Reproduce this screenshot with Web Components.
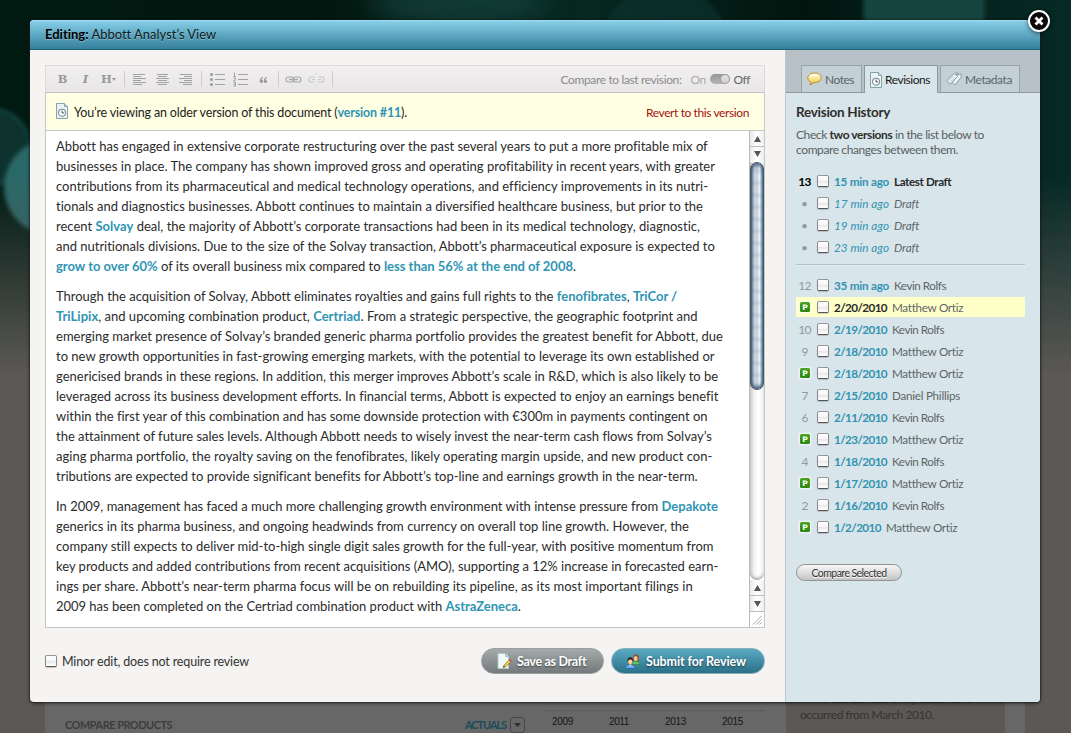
<!DOCTYPE html>
<html lang="en">
<head>
<meta charset="utf-8">
<title>Editing: Abbott Analyst's View</title>
<style>
html,body{margin:0;height:733px;overflow:hidden;background:#5b5855;font-family:Lato,"Open Sans",sans-serif;font-size:13px;color:#2a2a2a}
</style>
</head>
<body>
<app-screen></app-screen>

<script>
const define = (name, html, setup) => {
  const t = document.createElement('template');
  t.innerHTML = html;
  customElements.define(name, class extends HTMLElement {
    connectedCallback() {
      if (this.shadowRoot) return;
      this.attachShadow({ mode: 'open' }).append(t.content.cloneNode(true));
      if (setup) setup(this, this.shadowRoot);
    }
  });
};

/* One line of text, tracked so that it fills the measure given by w. */
define('text-line', `
<style>
:host{display:block;width:fit-content;white-space:nowrap}
::slotted(a){color:#2f95b3;font-weight:700}
::slotted(b){font-weight:700;color:#2e2e2e}
</style><slot></slot>`, el => {
  const w = +el.getAttribute('w');
  const n = el.textContent.length;
  if (w) el.style.letterSpacing = ((w - el.getBoundingClientRect().width) / n).toFixed(4) + 'px';
});

/* Small picture icons */
const pics = {
  doc: [12, 16, `<path d="M.5.5h8l3 3v12H.5z" fill="#eaf3f5" stroke="#86a3aa"/><path d="M8.500.5v3h3" fill="#c9dde2" stroke="#86a3aa"/><circle cx="6" cy="9.700" r="3.500" fill="#fff" stroke="#7d8b90" stroke-width="1.100"/><path d="M6 7.600v2.300h2" fill="none" stroke="#3f5158"/>`],
  note: [15, 14, `<defs><linearGradient id="g" x2="0" y2="1"><stop stop-color="#fffbd8"/><stop offset=".5" stop-color="#f7e38b"/><stop offset="1" stop-color="#edc645"/></linearGradient></defs><path d="M7.500 1C3.500 1 .8 3 .8 5.700c0 2 1.200 3.400 3 4.200L3 13l4-2.500c4.200.1 7.200-1.800 7.200-4.800S11.500 1 7.500 1z" fill="url(#g)" stroke="#b98e2c"/><path d="M3.500 5c1-1.700 5.500-2.200 7.500-.8" stroke="#fff" fill="none" stroke-width="1.300"/>`],
  tags: [16, 14, `<g fill="#edf5f7" stroke="#78959f" stroke-width=".9"><path d="M6.500 10.500 12 2.300l3-.3.3 3-6.500 8z"/><path d="M.7 8.500 8.600 1.200l3.100-.3.200 3.200-7.500 8z"/></g><circle cx="10" cy="2.800" r=".8" fill="#4f6e79"/><path d="m2.500 8.700 5-4.700M4 10l5-4.700" stroke="#a9c0c8" stroke-width=".7"/>`],
  draft: [15, 16, `<path d="M1 .5h7.500l3 3v12H1z" fill="#eff9f7" stroke="#b4c8c6"/><path d="M8.500.5v3h3" fill="#c4dcda" stroke="#a3bdbb"/><path d="m6.300 14.500.8-2.400 5-5 1.600 1.600-5 5z" fill="#f9d94f" stroke="#8b6a20" stroke-width=".8"/><path d="m12.100 7.100 1-1 1.600 1.600-1 1z" fill="#e0453d"/><path d="m6.300 14.500.5-1.500 1 1z" fill="#222"/>`],
  users: [16, 15, `<path d="M6.500 10.500c0-2.500 1.700-3.300 4-3.300s4.500.8 4.500 3.300z" fill="#5ec06f" stroke="#2f8342" stroke-width=".7"/><path d="M8 6.800C7.800 2 8.600.6 10.900.6s3.300 1.600 2.900 6.200z" fill="#9a4b1f"/><ellipse cx="10.700" cy="4.500" rx="1.900" ry="2.500" fill="#f8c79c"/><path d="M.6 14.300c0-2.700 1.900-3.600 4.700-3.600s4.700.9 4.700 3.600z" fill="#69b1f5" stroke="#2860b0" stroke-width=".7"/><path d="m4 10.700 1.300 1.600 1.300-1.600z" fill="#fff"/><ellipse cx="5.300" cy="7.700" rx="2.300" ry="3" fill="#fbd3ab" stroke="#7a4b28" stroke-width=".5"/><path d="M2.500 7.500c-.3-3 .9-4.200 2.800-4.200s3.100 1.200 2.800 4.200c-.7-1.500-1.500-2-2.800-2s-2.100.5-2.800 2z" fill="#2c211d"/>`]
};
define('pic-icon', `<style>:host{display:block;flex:none}svg{display:block}</style>`, (el, r) => {
  const [w, h, d] = pics[el.getAttribute('name')];
  const box = document.createElement('div');
  box.innerHTML = `<svg width="${w}" height="${h}" viewBox="0 0 ${w} ${h}">${d}</svg>`;
  r.append(box);
});

/* Toolbar buttons: 23px cells with a 17x13 glyph */
const rows = (...l) => l.map(([x, y, w]) => `<path d="M${x} ${y}.5h${w}" stroke="#a2a2a2"/>`).join('');
const tools = {
  left: rows([2,1,12],[2,3,8],[2,5,13],[2,7,8],[2,9,13],[2,11,9]),
  center: rows([3,1,11],[4,3,9],[2,5,13],[4,7,9],[2,9,13],[4,11,9]),
  right: rows([3,1,12],[7,3,8],[2,5,13],[7,7,8],[2,9,13],[6,11,9]),
  ul: `<g fill="#999"><circle cx="2.500" cy="1.500" r="1.500"/><circle cx="2.500" cy="6.500" r="1.500"/><circle cx="2.500" cy="11.500" r="1.500"/></g>` + rows([6,1,10],[6,6,10],[6,11,10]),
  ol: `<g fill="none" stroke="#999" stroke-width=".9"><path d="M1.500 0h1v3.500m-1 0h2M1.500 5h2v1.300l-2 1.500h2M1.500 9.500h2v3.600h-2m0-1.800h2"/></g>` + rows([6,1,10],[6,6,10],[6,11,10]),
  quote: `<g fill="#999"><path d="M8 4C6 4.600 4.700 6 4.700 8c0 1.300.8 2 1.700 2a1.600 1.600 0 0 0 .1-3.200c0-.9.600-1.600 1.500-2.100z"/><path d="M12 4c-2 .6-3.300 2-3.300 4 0 1.300.8 2 1.700 2a1.600 1.600 0 0 0 .1-3.200c0-.9.600-1.600 1.500-2.100z"/></g>`,
  link: `<g fill="none" stroke="#a8a8a8" stroke-width="1.200"><rect x="1.100" y="4" width="7.600" height="5" rx="2"/><rect x="8.200" y="4" width="7.600" height="5" rx="2"/><path d="M4 6.500h3m3 0h3M7 6.500h3" stroke-width="1.400"/></g>`,
  unlink: `<g fill="none" stroke="#c9c9c9" stroke-width="1.100"><path d="M7 4H3a2 2 0 0 0-2 2v1a2 2 0 0 0 2 2h4M10 4h4a2 2 0 0 1 2 2v1a2 2 0 0 1-2 2h-4M4 6.500h3m3 0h3"/><path d="M8.500 0v2m0 9v2" stroke="#d8d8d8"/></g>`
};
define('tool-button', `
<style>:host{display:flex;width:23px;height:27px;align-items:center;justify-content:center;color:#999;font:700 11.500px "DejaVu Serif",serif}
:host([i]){font-style:italic}
::slotted(i){display:inline-block;border:2.500px solid transparent;border-top:3px solid #999;border-bottom:0;margin:0}
svg{display:block;overflow:visible}</style><slot></slot>`, (el, r) => {
  const n = el.getAttribute('name');
  if (n) r.querySelector('slot').insertAdjacentHTML('afterend', `<svg width="17" height="13" viewBox="0 0 17 13">${tools[n]}</svg>`);
});
define('tool-rule', `<style>:host{display:flex;justify-content:center;width:8px}div{width:1px;height:16px;background:#cdcbcc}</style><div></div>`);

define('check-box', `<style>:host{display:block;flex:none;box-sizing:border-box;width:12px;height:12px;border:1px solid #8b8b8b;border-color:#979797 #8a8a8a #555;border-radius:2px;background:linear-gradient(#fff 0,#f6f6f6 45%,#e6e6e6 50%,#fff 95%);box-shadow:0 1px 1px rgba(0,0,0,.18)}</style>`);

define('pill-button', `
<style>
:host{display:flex;box-sizing:border-box;align-items:center;height:26px;border-radius:13px;padding-left:15px;gap:5px;color:#fff;font-weight:700;font-size:12.500px;text-shadow:0 1px 2px rgba(0,0,0,.55);border:1px solid #9aa0a0;background:linear-gradient(#a5abab,#747a7b);width:124px}
:host([kind=primary]){background:linear-gradient(#5aaac2,#2c7089);border-color:#86aebb;width:154px;padding-left:13px}
:host([kind=small]){height:17px;width:106px;padding:0;justify-content:center;color:#333;font-weight:400;font-size:10.500px;text-shadow:0 1px #fff;border-color:#929292;background:linear-gradient(#f6f6f6,#dedede 50%,#c4c4c4)}
</style><slot name="icon"></slot><slot></slot>`);

define('toggle-switch', `<style>:host{display:block;width:20px;height:10px;border-radius:5px;background:linear-gradient(#979797,#b5b5b5)}
div{box-sizing:border-box;width:10px;height:10px;margin-left:10px;border-radius:5px;background:linear-gradient(#e2e2e2,#cfcfcf);border:1px solid #a0a0a0}</style><div></div>`);

define('editor-toolbar', `
<style>
:host{display:flex;height:26px;align-items:center;border:1px solid #dcdadb;border-bottom-color:#c2c2c2;background:linear-gradient(#f1eff0,#e8e6e7);padding-left:5px}
.cmp{margin-left:auto;display:flex;align-items:center;color:#8b8b8b;font-size:12px;padding-right:14px}
.on{color:#aaa;margin:0 4px 0 9px}.off{margin-left:4px;color:#666}
</style>
<tool-button>B</tool-button><tool-button i>I</tool-button><tool-button>H<i></i></tool-button>
<tool-rule></tool-rule>
<tool-button name="left"></tool-button><tool-button name="center"></tool-button><tool-button name="right"></tool-button>
<tool-rule style="width:9px"></tool-rule>
<tool-button name="ul"></tool-button><tool-button name="ol"></tool-button><tool-button name="quote"></tool-button>
<tool-rule style="width:7px"></tool-rule>
<tool-button name="link"></tool-button><tool-button name="unlink"></tool-button>
<tool-rule></tool-rule>
<div class="cmp"><text-line w="121">Compare to last revision:</text-line><text-line class="on" w="15">On</text-line><toggle-switch></toggle-switch><text-line class="off" w="16">Off</text-line></div>`);

define('version-notice', `
<style>
:host{display:flex;align-items:center;height:36px;box-sizing:content-box;background:#ffffe3;border:1px solid #c9c9c2;border-top:0;border-bottom-color:#c6c6c6;padding:1px 15px 0 10px;color:#1c1c1c;font-size:12.500px}
text-line:last-child{margin-left:auto;color:#a5110f;font-size:12px}
pic-icon{margin:0 6px 2px 0}
</style>
<pic-icon name="doc"></pic-icon>
<text-line w="333">You’re viewing an older version of this document (<a>version #11</a>).</text-line>
<text-line w="103">Revert to this version</text-line>`);

define('scroll-bar', `
<style>
:host{display:flex;flex-direction:column;width:14px;border-left:1px solid #b9b9b9;background:#fff}
.btn{height:15px;display:flex;align-items:center;justify-content:center;background:linear-gradient(90deg,#e9e9e9,#fff 50%,#efefef);border-bottom:1px solid #bdbdbd}
.btn svg{display:block}
.track{flex:1;background:linear-gradient(90deg,#ccc,#f1f1f1 30%,#fff 60%,#f0f0f0);border-radius:0 0 7px 7px;box-shadow:inset 0 -3px 3px -1px #aaa}
.thumb{height:228px;box-sizing:border-box;border:1px solid #43566c;border-radius:7px;
background:repeating-linear-gradient(rgba(255,255,255,.0) 0 5px,rgba(80,110,160,.14) 8px,rgba(255,255,255,0) 12px),linear-gradient(90deg,#52677f 0,#aebccb 18%,#d3dae5 35%,#c1cedb 50%,#f0f8fd 72%,#b5c5d4 86%,#647b93);box-shadow:inset 0 3px 4px -1px #3c536d,inset 0 -3px 4px -1px #3c536d}
.grip{height:15px;display:flex;align-items:center;justify-content:center}
.nb{border-color:#fff;height:14px}
</style>
<div class="btn"><svg width="7" height="6"><path d="M3.500 0 7 6H0z" fill="#555"/></svg></div>
<div class="btn nb"><svg width="7" height="6"><path d="M3.500 6 7 0H0z" fill="#555"/></svg></div>
<div class="track"><div class="thumb"></div></div>
<div class="btn"><svg width="7" height="6"><path d="M3.500 0 7 6H0z" fill="#555"/></svg></div>
<div class="btn"><svg width="7" height="6"><path d="M3.500 6 7 0H0z" fill="#555"/></svg></div>
<div class="grip"><svg width="10" height="10"><path d="M1 9.500 9.500 1M4.500 9.500l5-5M7.500 9.500l2-2" stroke="#aaa"/></svg></div>`);

define('document-body', `
<style>
:host{display:flex;height:496px;background:#fff;border:1px solid #c6c6c6;border-top:0}
.text{flex:1;padding:5px 0 0 10px;font-size:13px;line-height:20px;color:#2b2b2b}
.p{margin-bottom:10px}
</style>
<div class="text">
<div class="p">
<text-line w="651">Abbott has engaged in extensive corporate restructuring over the past several years to put a more profitable mix of</text-line>
<text-line w="659">businesses in place. The company has shown improved gross and operating profitability in recent years, with greater</text-line>
<text-line w="652">contributions from its pharmaceutical and medical technology operations, and efficiency improvements in its nutri-</text-line>
<text-line w="647">tionals and diagnostics businesses. Abbott continues to maintain a diversified healthcare business, but prior to the</text-line>
<text-line w="644">recent <a>Solvay</a> deal, the majority of Abbott’s corporate transactions had been in its medical technology, diagnostic,</text-line>
<text-line w="659">and nutritionals divisions. Due to the size of the Solvay transaction, Abbott’s pharmaceutical exposure is expected to</text-line>
<text-line w="520"><a>grow to over 60%</a> of its overall business mix compared to <a>less than 56% at the end of 2008</a>.</text-line>
</div>
<div class="p">
<text-line w="621">Through the acquisition of Solvay, Abbott eliminates royalties and gains full rights to the <a>fenofibrates</a>, <a>TriCor /</a></text-line>
<text-line w="642"><a>TriLipix</a>, and upcoming combination product, <a>Certriad</a>. From a strategic perspective, the geographic footprint and</text-line>
<text-line w="666">emerging market presence of Solvay’s branded generic pharma portfolio provides the greatest benefit for Abbott, due</text-line>
<text-line w="659">to new growth opportunities in fast-growing emerging markets, with the potential to leverage its own established or</text-line>
<text-line w="662">genericised brands in these regions. In addition, this merger improves Abbott’s scale in R&amp;D, which is also likely to be</text-line>
<text-line w="661">leveraged across its business development efforts. In financial terms, Abbott is expected to enjoy an earnings benefit</text-line>
<text-line w="652">within the first year of this combination and has some downside protection with €300m in payments contingent on</text-line>
<text-line w="655">the attainment of future sales levels. Although Abbott needs to wisely invest the near-term cash flows from Solvay’s</text-line>
<text-line w="656">aging pharma portfolio, the royalty saving on the fenofibrates, likely operating margin upside, and new product con-</text-line>
<text-line w="641">tributions are expected to provide significant benefits for Abbott’s top-line and earnings growth in the near-term.</text-line>
</div>
<div class="p">
<text-line w="662">In 2009, management has faced a much more challenging growth environment with intense pressure from <a>Depakote</a></text-line>
<text-line w="633">generics in its pharma business, and ongoing headwinds from currency on overall top line growth. However, the</text-line>
<text-line w="658">company still expects to deliver mid-to-high single digit sales growth for the full-year, with positive momentum from</text-line>
<text-line w="663">key products and added contributions from recent acquisitions (AMO), supporting a 12% increase in forecasted earn-</text-line>
<text-line w="636">ings per share. Abbott’s near-term pharma focus will be on rebuilding its pipeline, as its most important filings in</text-line>
<text-line w="465">2009 has been completed on the Certriad combination product with <a>AstraZeneca</a>.</text-line>
</div>
</div>
<scroll-bar></scroll-bar>`);

define('tab-item', `
<style>
:host{display:flex;box-sizing:border-box;align-items:center;gap:3px;height:27px;padding-left:5px;border:1px solid #98a2a7;border-bottom:0;background:#c3d0d5;color:#5c666a;font-size:12px}
:host([on]){height:28px;background:#d8e5ea;color:#1b1b1b;border-color:#8d989d}
</style><slot name="icon"></slot><slot></slot>`);

define('rev-row', `
<style>
:host{display:flex;align-items:center;height:20px;margin-bottom:2px;font-size:12px;color:#5f6668}
:host([hl]){background:#ffffc8}
.n{width:17px;display:flex;justify-content:center;color:#929a9d;margin-right:4px}
.n text-line{font-size:12px}
.d{margin:0 5px 0 5px;color:#3393b1;font-weight:700;font-size:11.700px}
.w{font-size:11.700px}
:host([it]) .d,:host([it]) .w{font-style:italic;font-weight:400}
:host([latest]) .n{color:#000;font-weight:700}
:host([latest]) .w{color:#2a2a2a;font-weight:700}
:host([hl]) .d{color:#2a2a2a}
.p{flex:none;display:block}
</style>`, (el, r) => {
  const a = k => el.getAttribute(k);
  const n = a('n');
  const mark = n === 'P' ? '<svg class="p" width="14" height="14"><defs><linearGradient id="pg" x2="0" y2="1"><stop stop-color="#4ba51f"/><stop offset="1" stop-color="#2c8510"/></linearGradient></defs><rect x=".5" y=".5" width="13" height="13" rx="2" fill="#fff" opacity=".5"/><rect x="2" y="2" width="10" height="10" rx="1.500" fill="url(#pg)"/><text x="7" y="9.700" text-anchor="middle" font-family="DejaVu Sans,sans-serif" font-weight="700" font-size="7.500" fill="#fff">P</text></svg>' : n === '•' ? '<span>•</span>' : `<text-line w="${n.length * 6.2}">${n}</text-line>`;
  const box = document.createElement('template');
  box.innerHTML = `<div class="n">${mark}</div><check-box></check-box><text-line class="d" w="${a('dw')}">${a('d')}</text-line><text-line class="w" w="${a('ww')}">${a('who')}</text-line>`;
  r.append(box.content);
});

define('side-panel', `
<style>
:host{display:flex;flex-direction:column;width:254px;border-left:1px solid #c0c4c6;background:#d8e5ea;border-radius:0 0 4px 0}
.tabs{display:flex;height:27px;padding:15px 0 0 15px;gap:2px;background:#b7c1c7;border-bottom:1px solid #8d989d}
.in{padding:11px 15px 0 10px}
.h{font-size:13.500px;font-weight:700;line-height:17px;color:#2e2e2e}
.t{margin-top:6px;margin-bottom:14px;font-size:12px;line-height:15px;color:#5a5f61}
hr{border:0;border-top:1px solid #b3c3cc;border-bottom:1px solid #e6eff2;margin:7px 0 9px}
pill-button{margin-top:27px}
</style>
<div class="tabs">
<tab-item style="width:61px"><pic-icon slot="icon" name="note"></pic-icon><text-line w="29">Notes</text-line></tab-item>
<tab-item on style="width:74px"><pic-icon slot="icon" name="doc"></pic-icon><text-line w="45">Revisions</text-line></tab-item>
<tab-item style="width:80px"><pic-icon slot="icon" name="tags"></pic-icon><text-line w="47">Metadata</text-line></tab-item>
</div>
<div class="in">
<text-line class="h" w="94">Revision History</text-line>
<div class="t"><text-line w="188">Check <b>two versions</b> in the list below to</text-line><text-line w="162">compare changes between them.</text-line></div>
<rev-row latest n="13" d="15 min ago" dw="55" who="Latest Draft" ww="57"></rev-row>
<rev-row it n="•" d="17 min ago" dw="55" who="Draft" ww="25"></rev-row>
<rev-row it n="•" d="19 min ago" dw="55" who="Draft" ww="25"></rev-row>
<rev-row it n="•" d="23 min ago" dw="55" who="Draft" ww="25"></rev-row>
<hr>
<rev-row n="12" d="35 min ago" dw="55" who="Kevin Rolfs" ww="52"></rev-row>
<rev-row hl n="P" d="2/20/2010" dw="53" who="Matthew Ortiz" ww="71"></rev-row>
<rev-row n="10" d="2/19/2010" dw="53" who="Kevin Rolfs" ww="52"></rev-row>
<rev-row n="9" d="2/18/2010" dw="53" who="Matthew Ortiz" ww="71"></rev-row>
<rev-row n="P" d="2/18/2010" dw="53" who="Matthew Ortiz" ww="71"></rev-row>
<rev-row n="7" d="2/15/2010" dw="53" who="Daniel Phillips" ww="68"></rev-row>
<rev-row n="6" d="2/11/2010" dw="53" who="Kevin Rolfs" ww="52"></rev-row>
<rev-row n="P" d="1/23/2010" dw="53" who="Matthew Ortiz" ww="71"></rev-row>
<rev-row n="4" d="1/18/2010" dw="53" who="Kevin Rolfs" ww="52"></rev-row>
<rev-row n="P" d="1/17/2010" dw="53" who="Matthew Ortiz" ww="71"></rev-row>
<rev-row n="2" d="1/16/2010" dw="53" who="Kevin Rolfs" ww="52"></rev-row>
<rev-row n="P" d="1/2/2010" dw="47" who="Matthew Ortiz" ww="71"></rev-row>
<pill-button kind="small"><text-line w="75">Compare Selected</text-line></pill-button>
</div>`);

define('close-button', `<style>:host{display:block}svg{display:block;filter:drop-shadow(0 1px 2px rgba(0,0,0,.6))}</style>
<svg width="24" height="24"><circle cx="12" cy="12" r="10" fill="#0a0a0a" stroke="#fff" stroke-width="2"/><path d="m8.500 8.500 7 7m0-7-7 7" stroke="#fff" stroke-width="2.800"/></svg>`);

define('edit-dialog', `
<style>
:host{display:flex;flex-direction:column;width:1010px;height:682px;border-radius:4px;background:#f5f4f2;box-shadow:0 0 1px 1px rgba(25,25,25,.4),0 1px 3px 1px rgba(20,20,20,.5)}
header{height:29px;box-sizing:content-box;display:flex;align-items:center;padding-left:15px;border-radius:4px 4px 0 0;background:linear-gradient(#a5dcef 0,#84cce5 2px,#347f9c);border-bottom:1px solid #1f6178;color:#101b20;font-size:13px;text-shadow:0 1px rgba(255,255,255,.3)}
header text-line{margin-bottom:1px}
main{flex:1;display:flex}
.left{flex:1;padding:15px 20px 0 15px}
footer{display:flex;align-items:center;margin-top:20px;gap:5px;font-size:12.500px;color:#333}
footer .sp{flex:1}
.b1{width:123px}
.b2{margin-left:2px}
</style>
<header><text-line w="171"><b style="color:#000">Editing:</b> Abbott Analyst’s View</text-line></header>
<main>
<div class="left">
<editor-toolbar></editor-toolbar>
<version-notice></version-notice>
<document-body></document-body>
<footer><check-box></check-box><text-line w="187">Minor edit, does not require review</text-line><div class="sp"></div>
<pill-button class="b1"><pic-icon slot="icon" name="draft"></pic-icon><text-line w="69">Save as Draft</text-line></pill-button>
<pill-button class="b2" kind="primary"><pic-icon slot="icon" name="users"></pic-icon><text-line w="100">Submit for Review</text-line></pill-button>
</footer>
</div>
<side-panel></side-panel>
</main>`);

/* Dimmed page that lies behind the dialog */
define('dimmed-page', `
<style>
:host{display:flex;flex-direction:column;width:1071px;height:733px;position:relative;overflow:hidden}
.bg{position:absolute;inset:0}
.sheet{position:relative;margin:670px 46px 0 45px;width:980px;height:63px;background:#676767;display:flex;color:#3d3d3d}
.main{width:720px;padding:40px 0 0 20px;display:flex;align-items:flex-start;box-sizing:border-box;font:700 11px/30px Lato,sans-serif}
.cp{width:400px}
.act{color:#1d4b57}
.dd{width:13px;height:14px;margin:7px 20px 0 4px;border:1px solid #474747;border-radius:3px;display:flex;align-items:center;justify-content:center}
.yrs{flex:1;display:flex;border-top:1px solid #5a5a5a;font:10px/21px "Liberation Sans",sans-serif;color:#161616;padding-left:7px;gap:36px}
.aside{margin-left:21px;width:219px;background:#5b5855;padding:21px 0 0 14px;box-sizing:border-box;font-size:12px;line-height:16px;color:#343434}
</style>
<svg class="bg" width="1071" height="733">
<defs>
<linearGradient id="fade" x2="0" y2="1"><stop offset=".24" stop-color="#5b5855" stop-opacity="0"/><stop offset=".51" stop-color="#5b5855"/></linearGradient>
<linearGradient id="dark"><stop stop-color="#001a12"/><stop offset=".3" stop-color="#02170f"/><stop offset=".55" stop-color="#062820"/><stop offset=".75" stop-color="#02150f"/><stop offset="1" stop-color="#062a25"/></linearGradient>
<filter id="soft"><feGaussianBlur stdDeviation="2"/></filter>
<filter id="wide"><feGaussianBlur stdDeviation="14"/></filter>
</defs>
<rect width="1071" height="733" fill="url(#dark)"/>
<ellipse cx="460" cy="0" rx="90" ry="30" fill="#13443f" opacity=".7" filter="url(#wide)"/>
<circle cx="665" cy="52" r="66" fill="#0c332d" opacity=".7" filter="url(#soft)"/>
<circle cx="924" cy="8" r="61" fill="#15453f" filter="url(#soft)"/>
<circle cx="-8" cy="147" r="38" fill="#0d332e" stroke="#1c4f4b" stroke-width="2" filter="url(#soft)"/>
<circle cx="52" cy="187" r="48" fill="#2a6868" filter="url(#soft)"/>
<rect width="1071" height="733" fill="url(#fade)"/>
</svg>
<div class="sheet">
<div class="main"><div class="cp"><text-line w="107">COMPARE PRODUCTS</text-line></div><text-line class="act" w="41">ACTUALS</text-line><div class="dd"><svg width="7" height="4"><path d="M0 0h7L3.500 4z" fill="#303030"/></svg></div>
<div class="yrs"><text-line w="21">2009</text-line><text-line w="20">2011</text-line><text-line w="21">2013</text-line><text-line w="21">2015</text-line></div></div>
<div class="aside"><text-line w="172">in the US. Generic entry could have</text-line><text-line w="134">occurred from March 2010.</text-line></div>
</div>`);

define('app-screen', `
<style>
:host{display:block;position:relative;width:1071px;height:733px;overflow:hidden}
edit-dialog{position:absolute;left:30px;top:20px}
close-button{position:absolute;left:1027px;top:9px}
</style>
<dimmed-page></dimmed-page>
<edit-dialog></edit-dialog>
<close-button></close-button>`);
</script>
</body>
</html>
